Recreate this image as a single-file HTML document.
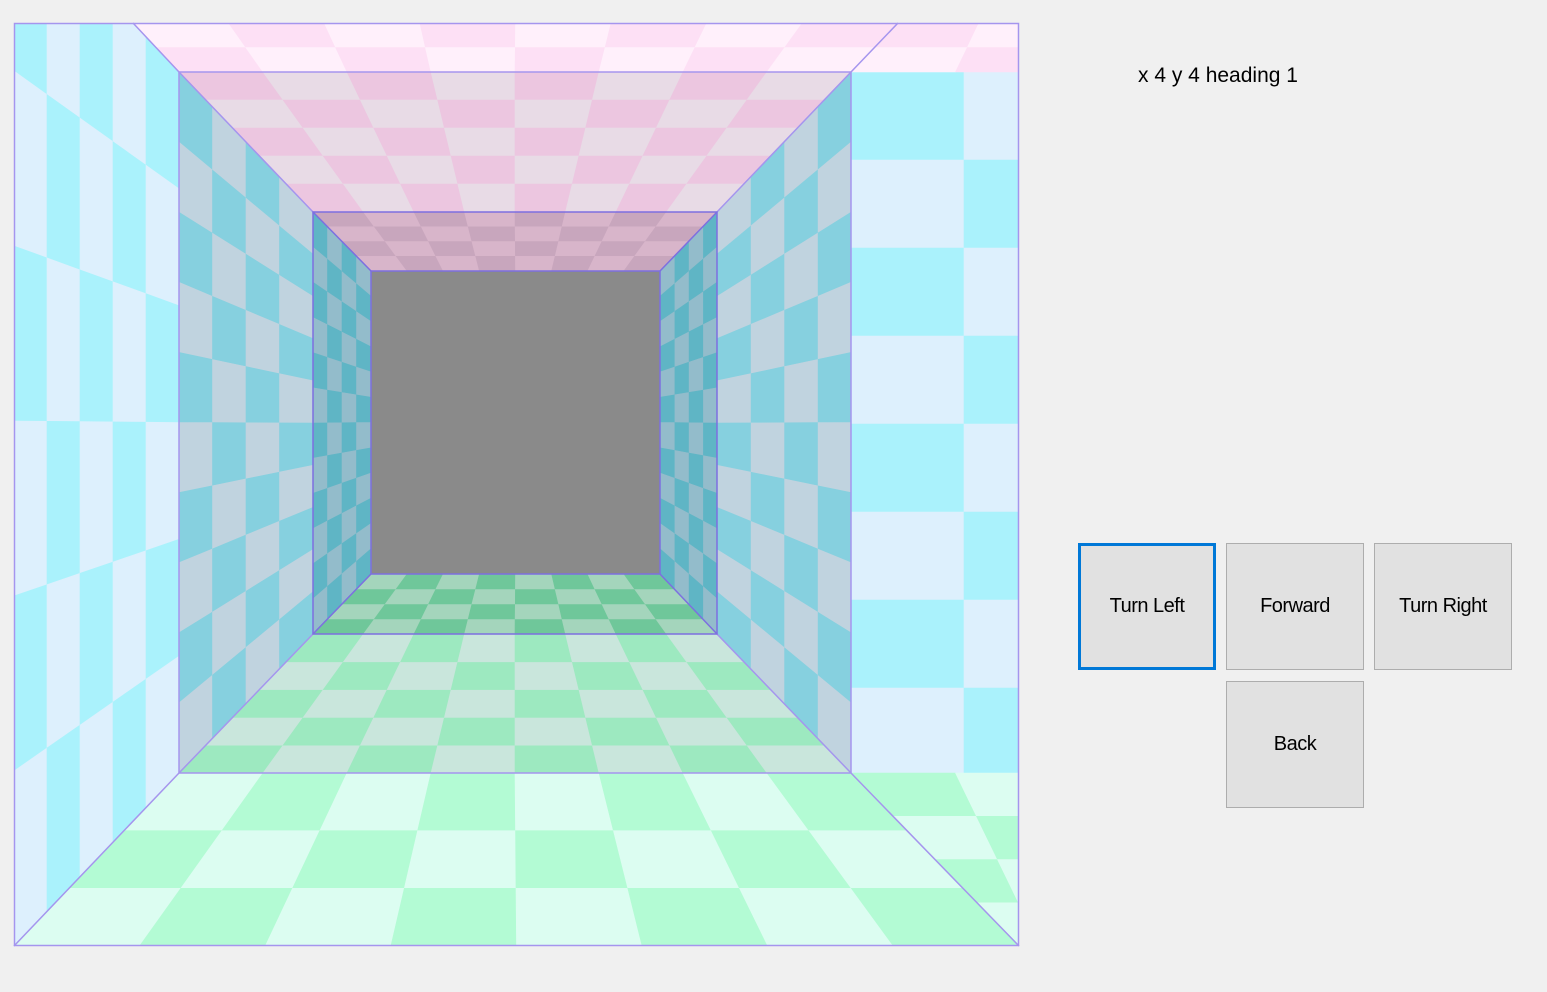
<!DOCTYPE html>
<html><head><meta charset="utf-8"><style>
html,body{margin:0;padding:0;background:#f0f0f0;width:1547px;height:992px;overflow:hidden;font-family:"Liberation Sans",sans-serif}
#v{position:absolute;left:0;top:0}
.lbl{position:absolute;left:1138px;top:64px;font-size:21px;color:#000}
.b{position:absolute;width:134px;height:124px;background:#e1e1e1;border:1px solid #adadad;box-sizing:border-box;display:flex;align-items:center;justify-content:center;font-size:20px;color:#000;letter-spacing:-0.5px}
.f{border:3px solid #0078d7}
</style></head><body>
<svg id="v" width="1547" height="992" xmlns="http://www.w3.org/2000/svg">
<defs><clipPath id="c"><rect x="14" y="23" width="1005" height="923"/></clipPath></defs>
<g id="g" clip-path="url(#c)"></g>
<g fill="none" stroke="#a595ee" stroke-width="1.5">
<rect x="14.5" y="23.5" width="1004" height="922"/>
<line x1="133" y1="23" x2="179" y2="72"/><line x1="898" y1="23" x2="851" y2="72"/>
<line x1="14" y1="946" x2="179" y2="773"/><line x1="1019" y1="946" x2="851" y2="773"/>
<rect x="179" y="72" width="672" height="701"/>
<line x1="179" y1="72" x2="313" y2="212"/><line x1="851" y1="72" x2="717" y2="212"/>
<line x1="179" y1="773" x2="313" y2="634"/><line x1="851" y1="773" x2="717" y2="634"/>
</g>
<g fill="none" stroke="#7d6fe0" stroke-width="1.5">
<rect x="313" y="212" width="404" height="422"/>
<line x1="313" y1="212" x2="371" y2="271"/><line x1="717" y1="212" x2="660" y2="271"/>
<line x1="313" y1="634" x2="371" y2="574"/><line x1="717" y1="634" x2="660" y2="574"/>
<rect x="371" y="271" width="289" height="303"/>
</g>
</svg>
<div class="lbl">x 4 y 4 heading 1</div>
<div class="b f" style="left:1078px;top:543px;width:138px;height:127px">Turn Left</div>
<div class="b" style="left:1226px;top:543px;width:138px;height:127px">Forward</div>
<div class="b" style="left:1374px;top:543px;width:138px;height:127px">Turn Right</div>
<div class="b" style="left:1226px;top:681px;width:138px;height:127px">Back</div>
<script>
var g=document.getElementById('g'),NS='http://www.w3.org/2000/svg';
function poly(pts,fill){var p=document.createElementNS(NS,'polygon');p.setAttribute('points',pts.map(function(a){return a[0].toFixed(1)+','+a[1].toFixed(1)}).join(' '));p.setAttribute('fill',fill);p.setAttribute('stroke',fill);p.setAttribute('stroke-width','0.6');g.appendChild(p);}
function L(a,b,t){return [a[0]+(b[0]-a[0])*t,a[1]+(b[1]-a[1])*t];}
function bil(q,u,v){var a=L(q[0],q[1],u),b=L(q[3],q[2],u);return L(a,b,v);}
function quad(q,nu,nv,c1,c2,off){off=off||0;for(var i=0;i<nu;i++)for(var j=0;j<nv;j++){var u0=i/nu,u1=(i+1)/nu,v0=j/nv,v1=(j+1)/nv;poly([bil(q,u0,v0),bil(q,u1,v0),bil(q,u1,v1),bil(q,u0,v1)],((i+j+off)%2)?c2:c1);}}
poly([[14,23],[1019,23],[1019,946],[14,946]],'#ddf0fd');
for(var j=0;j<8;j++){for(var i=0;i<2;i++){var x0=851+i*113,x1=i?1019:964,y0=72+j*88,y1=72+(j+1)*88;poly([[x0,y0],[x1,y0],[x1,y1],[x0,y1]],((i+j)%2)?'#ddf0fd':'#aaf2fc');}}
quad([[898,23],[1060,23],[1060,72],[851,72]],2,2,'#fde0f5','#fff0fb');
quad([[851,773],[1060,773],[1060,946],[1019,946]],2,4,'#b3fbd4','#dcfdf1');
quad([[14,-104],[179,72],[179,773],[14,946]],5,6,'#aaf2fc','#ddf0fd');
quad([[133,23],[898,23],[851,72],[179,72]],8,2,'#fff0fb','#fde0f5');
quad([[179,773],[851,773],[1019,946],[14,946]],8,3,'#dcfdf1','#b3fbd4');
quad([[179,72],[851,72],[717,212],[313,212]],8,5,'#ecc6e0','#e8dbe6');
quad([[179,72],[313,212],[313,634],[179,773]],4,10,'#86d0df','#c0d3df');
quad([[851,72],[717,212],[717,634],[851,773]],4,10,'#86d0df','#c0d3df');
quad([[179,773],[851,773],[717,634],[313,634]],8,5,'#9de9c0','#c9e6dc');
quad([[313,212],[717,212],[660,271],[371,271]],8,4,'#c8a6bd','#d8b5ca');
quad([[313,212],[371,271],[371,574],[313,634]],4,12,'#5fb5c5','#93bccb');
quad([[717,212],[660,271],[660,574],[717,634]],4,12,'#5fb5c5','#93bccb');
quad([[313,634],[717,634],[660,574],[371,574]],8,4,'#6fc79a','#a4d5bc');
poly([[371,271],[660,271],[660,574],[371,574]],'#8a8a8a');
</script>
</body></html>
